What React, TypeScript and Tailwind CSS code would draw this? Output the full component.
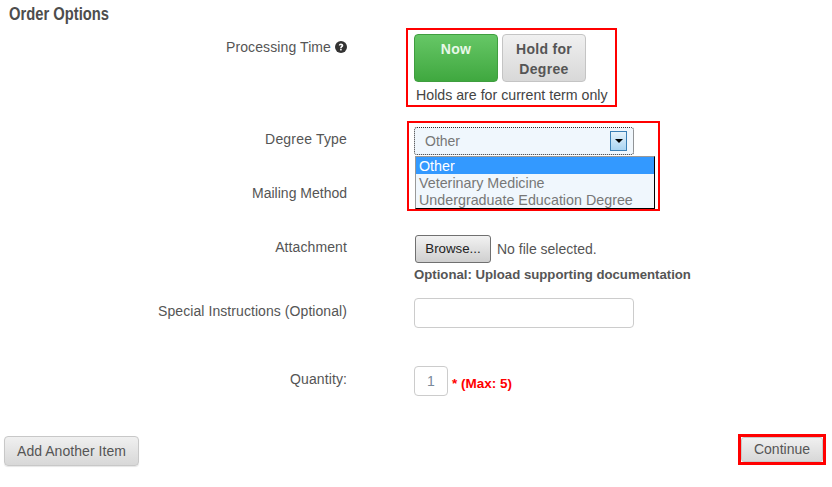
import React from "react";

function Row({ label, className, children }: { label: React.ReactNode; className?: string; children?: React.ReactNode }) {
  return (
    <div className={"flex items-start " + (className ?? "")}>
      <div className="w-[347px] shrink-0 text-right text-[14px] leading-[20px] text-[#555]">{label}</div>
      <div className="ml-[59px] relative">{children}</div>
    </div>
  );
}

export default function App() {
  return (
    <div className="relative w-[832px] h-[487px] overflow-hidden bg-white font-['Liberation_Sans',Arial,sans-serif] text-[#555]">
      <h2 className="pl-[11px] pt-[3px] h-[28px] text-[18px] leading-[22px] font-bold text-[#4d4d4d] origin-left scale-x-[0.82] whitespace-nowrap">
        Order Options
      </h2>

      <Row label={
        <span className="relative top-[9px] inline-flex items-center justify-end gap-[4px] tracking-[0.1px]">
          Processing Time
          <svg width="12" height="12" viewBox="0 0 12 12" className="shrink-0">
            <circle cx="6" cy="6" r="6" fill="#333" />
            <path d="M3.800 4.600c0-1.300 1.100-2 2.200-2s2.300.7 2.300 2c0 1.600-1.600 1.600-1.600 2.700H5.100c0-1.800 1.400-1.800 1.400-2.700 0-.4-.2-.6-.6-.6-.4 0-.7.200-.7.600z" fill="#fff" />
            <rect x="5.100" y="7.900" width="1.600" height="1.500" fill="#fff" />
          </svg>
        </span>
      }>
        <div className="w-[211px] h-[79px] border-2 border-[#f00] pl-[6px] pt-[4px]">
          <div className="flex gap-[4px]">
            <button className="w-[84px] h-[48px] rounded-[4px] border border-[#3f9e3f] bg-gradient-to-b from-[#66c766] to-[#3fa83f] text-[14px] leading-[20px] font-bold text-[#e8f8e8] pb-[19px] pt-0 tracking-[0.3px]">
              Now
            </button>
            <button className="w-[84px] h-[48px] rounded-[4px] border border-[#c4c4c4] bg-gradient-to-b from-[#f0f0f0] to-[#d8d8d8] text-[14px] leading-[20px] font-bold text-[#555] tracking-[0.3px] pt-[2px]">
              Hold for
              <br />
              Degree
            </button>
          </div>
          <div className="mt-[3px] pl-[2px] text-[14.2px] leading-[20px] text-[#444] whitespace-nowrap">Holds are for current term only</div>
        </div>
      </Row>

      <Row label={<span className="relative top-[8px] tracking-[0.18px]">Degree Type</span>} className="mt-[14px]">
        <div className="w-[253px] h-[90px] ml-[1px] border-2 border-[#f00]">
          <div className="ml-[5px] mt-[4px] w-[220px] h-[28px] rounded-[3px] border border-dotted border-[#333] bg-[#f0f7fd] flex items-center justify-between pl-[10px] pr-[6px] text-[14px] text-[#777]">
            <span>Other</span>
            <span className="w-[17px] h-[20px] border border-[#3a7fb5] bg-gradient-to-b from-[#e6f3fb] to-[#a9d4f2] flex items-center justify-center">
              <span className="w-0 h-0 border-x-[4px] border-x-transparent border-t-[4px] border-t-black" />
            </span>
          </div>
          <div className="absolute left-[9px] top-[35px] w-[240px] h-[53px] border border-black border-t-[#999] border-l-[#999] bg-[#f0f7fd] text-[14.3px] leading-[19px] text-[#777] whitespace-nowrap">
            <div className="h-[17px] bg-[#3399ff] text-white pl-[3px]">Other</div>
            <div className="h-[17px] pl-[3px]">Veterinary Medicine</div>
            <div className="h-[17px] pl-[3px]">Undergraduate Education Degree</div>
          </div>
        </div>
      </Row>

      <div className="absolute left-0 top-[183px] w-[347px] text-right text-[14px] leading-[20px] text-[#555]">Mailing Method</div>

      <Row label={<span className="relative top-[2px] tracking-[0.1px]">Attachment</span>} className="mt-[24px]">
        <div className="ml-[9px] flex items-center gap-[6px] h-[28px]">
          <button className="w-[76px] h-[28px] rounded-[3px] border border-[#707070] bg-gradient-to-b from-[#f2f2f2] to-[#cfcfcf] text-[13.3px] text-[#222]">Browse...</button>
          <span className="text-[14px] text-[#555]">No file selected.</span>
        </div>
        <div className="ml-[8px] mt-[3px] text-[13.2px] leading-[18px] font-bold text-[#555] whitespace-nowrap">Optional: Upload supporting documentation</div>
      </Row>

      <Row label={<span className="relative top-[3px] tracking-[0.07px]">Special Instructions (Optional)</span>} className="mt-[14px]">
        <div className="ml-[8px] w-[220px] h-[30px] rounded-[4px] border border-[#ccc] bg-white" />
      </Row>

      <Row label={<span className="relative top-[3px] tracking-[0.1px]">Quantity:</span>} className="mt-[38px]">
        <div className="ml-[8px] flex items-center gap-[4px]">
          <div className="w-[34px] h-[30px] rounded-[4px] border border-[#ccc] flex items-center justify-center text-[14px] text-[#7a8a9a]">1</div>
          <span className="mt-[6px] text-[13.5px] font-bold text-[#f00] whitespace-nowrap">* (Max: 5)</span>
        </div>
      </Row>

      <div className="flex items-start justify-between pl-[4px] pr-[6px] mt-[38px]">
        <button className="mt-[2px] w-[135px] h-[30px] rounded-[4px] border border-[#c8c8c8] bg-gradient-to-b from-[#f0f0f0] to-[#d8d8d8] text-[14px] tracking-[0.05px] text-[#555] shadow-[0_1px_1px_rgba(0,0,0,0.1)]">
          Add Another Item
        </button>
        <div className="w-[88px] h-[31px] border-[3px] border-[#f00]">
          <button className="w-full h-full rounded-[3px] border border-[#c8c8c8] bg-gradient-to-b from-[#f0f0f0] to-[#d8d8d8] text-[14px] text-[#555]">
            Continue
          </button>
        </div>
      </div>
    </div>
  );
}
